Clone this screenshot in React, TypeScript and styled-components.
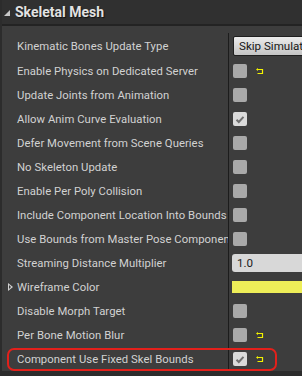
import { createGlobalStyle, styled } from "styled-components";

type Value =
  | { kind: "check"; checked?: boolean; reset?: boolean }
  | { kind: "combo"; text: string }
  | { kind: "number"; text: string }
  | { kind: "color"; color: string };

type Prop = {
  label: string;
  value: Value;
  expandable?: boolean;
  highlight?: boolean;
  tall?: boolean;
};

const props: Prop[] = [
  { label: "Kinematic Bones Update Type", value: { kind: "combo", text: "Skip Simulation Bones" }, tall: true },
  { label: "Enable Physics on Dedicated Server", value: { kind: "check", reset: true } },
  { label: "Update Joints from Animation", value: { kind: "check" } },
  { label: "Allow Anim Curve Evaluation", value: { kind: "check", checked: true } },
  { label: "Defer Movement from Scene Queries", value: { kind: "check" } },
  { label: "No Skeleton Update", value: { kind: "check" } },
  { label: "Enable Per Poly Collision", value: { kind: "check" } },
  { label: "Include Component Location Into Bounds", value: { kind: "check" } },
  { label: "Use Bounds from Master Pose Component", value: { kind: "check" } },
  { label: "Streaming Distance Multiplier", value: { kind: "number", text: "1.0" } },
  { label: "Wireframe Color", value: { kind: "color", color: "#eeee58" }, expandable: true },
  { label: "Disable Morph Target", value: { kind: "check" } },
  { label: "Per Bone Motion Blur", value: { kind: "check", reset: true } },
  {
    label: "Component Use Fixed Skel Bounds",
    value: { kind: "check", checked: true, reset: true },
    highlight: true,
  },
];

function ResetIcon() {
  return (
    <ResetWrap>
      <svg width="8" height="7" viewBox="0 0 8 7">
        <path d="M0 1.5 L2 0 L2 3 Z" fill="#f2f200" />
        <path d="M1.5 1.5 H6.5 V5.5 H1.5" fill="none" stroke="#f2f200" strokeWidth="1.2" />
      </svg>
    </ResetWrap>
  );
}

function ValueCell({ value }: { value: Value }) {
  switch (value.kind) {
    case "check":
      return (
        <>
          <CheckBox $checked={value.checked}>
            {value.checked && (
              <svg width="10" height="9" viewBox="0 0 10 9">
                <path d="M1.5 4.8 L3.8 7 L8.5 1.8" fill="none" stroke="#6f6f6f" strokeWidth="2" />
              </svg>
            )}
          </CheckBox>
          {value.reset && <ResetIcon />}
        </>
      );
    case "combo":
      return <Combo>{value.text}</Combo>;
    case "number":
      return <NumberField>{value.text}</NumberField>;
    case "color":
      return <ColorBar style={{ background: value.color }} />;
  }
}

export default function App() {
  return (
    <>
      <GlobalStyle />
      <Panel>
        <Header>
          <HeaderArrow />
          <HeaderTitle>Skeletal Mesh</HeaderTitle>
        </Header>
        <Rows>
          {props.map((p) => (
            <Row key={p.label} $tall={p.tall} $highlight={p.highlight}>
              <NameCell>
                <Expander>{p.expandable && <ExpandArrow />}</Expander>
                <Label>{p.label}</Label>
              </NameCell>
              <ValueBox>
                <ValueCell value={p.value} />
              </ValueBox>
            </Row>
          ))}
        </Rows>
      </Panel>
    </>
  );
}

const GlobalStyle = createGlobalStyle`
  html, body {
    margin: 0;
    padding: 0;
    background: #2c2c2c;
    overflow: hidden;
  }
  body {
    font-family: Roboto, "Noto Sans", sans-serif;
  }
`;

const Panel = styled.div`
  width: 300px;
  margin-left: 2px;
  overflow: hidden;
  background: #3d3d3d;
`;

const Header = styled.div`
  height: 24px;
  display: flex;
  align-items: center;
  background: #303030;
  border-bottom: 2px solid #232323;
`;

const HeaderArrow = styled.div`
  width: 0;
  height: 0;
  margin-left: 2px;
  margin-top: 1px;
  border-left: 6px solid transparent;
  border-bottom: 6px solid #c8c8c8;
`;

const HeaderTitle = styled.div`
  margin-left: 5px;
  font-size: 14px;
  font-weight: 700;
  color: #e2e2e2;
  text-shadow: 1px 1px 1px #111;
`;

const Rows = styled.div`
  padding-top: 7px;
  display: flex;
  flex-direction: column;
`;

const Row = styled.div<{ $tall?: boolean; $highlight?: boolean }>`
  position: relative;
  display: grid;
  grid-template-columns: 227px 1fr;
  height: ${(p) => (p.$tall ? "26px" : "24px")};

  &::after {
    content: "";
    display: ${(p) => (p.$highlight ? "block" : "none")};
    position: absolute;
    left: 5px;
    top: 1px;
    width: 270px;
    height: 23px;
    box-sizing: border-box;
    border: 2.5px solid #e3201b;
    border-radius: 7px;
    pointer-events: none;
  }
`;

const NameCell = styled.div`
  display: flex;
  align-items: center;
  border-right: 1px solid #1c1c1c;
  overflow: hidden;
  white-space: nowrap;
`;

const Expander = styled.div`
  width: 15px;
  flex: none;
  display: flex;
  align-items: center;
  justify-content: flex-end;
  padding-right: 4px;
  box-sizing: border-box;
`;

const ExpandArrow = styled.div`
  width: 0;
  height: 0;
  border-top: 4.5px solid transparent;
  border-bottom: 4.5px solid transparent;
  border-left: 5px solid #d0d0d0;
  position: relative;

  &::after {
    content: "";
    position: absolute;
    left: -4px;
    top: -2.5px;
    border-top: 2.5px solid transparent;
    border-bottom: 2.5px solid transparent;
    border-left: 2.8px solid #3d3d3d;
  }
`;

const Label = styled.div`
  font-size: 11.3px;
  letter-spacing: 0.05px;
  color: #d2d2d2;
`;

const ValueBox = styled.div`
  display: flex;
  align-items: center;
  padding-left: 4px;
  min-width: 0;
  white-space: nowrap;
`;

const CheckBox = styled.div<{ $checked?: boolean }>`
  width: 14px;
  height: 14px;
  flex: none;
  border-radius: 2px;
  background: ${(p) => (p.$checked ? "#dadada" : "#a9a9a9")};
  display: flex;
  align-items: center;
  justify-content: center;
`;

const ResetWrap = styled.div`
  margin-left: 9px;
  display: flex;
  align-items: center;
`;

const Combo = styled.div`
  height: 20px;
  flex: none;
  width: 120px;
  display: flex;
  align-items: center;
  padding-left: 5px;
  box-sizing: border-box;
  border: 1px solid #1f1f1f;
  border-radius: 2px;
  background: linear-gradient(#ececec, #c4c4c4);
  color: #161616;
  font-size: 11.6px;
`;

const NumberField = styled.div`
  height: 18px;
  flex: none;
  width: 120px;
  margin-left: -1px;
  display: flex;
  align-items: center;
  padding-left: 5px;
  box-sizing: border-box;
  border-radius: 3px;
  background: #d8d8d8;
  color: #1a1a1a;
  font-size: 11.6px;
`;

const ColorBar = styled.div`
  height: 12px;
  flex: none;
  width: 120px;
  margin-left: -1px;
`;
